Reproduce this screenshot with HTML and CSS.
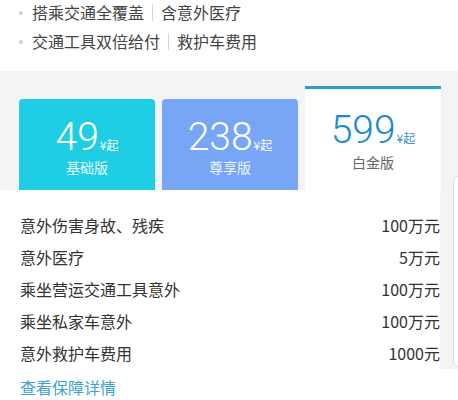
FILE: index.html
```html
<!DOCTYPE html>
<html>
    <head>
        <title>交通意外险</title>
        <meta charset="UTF-8">
        <link rel="stylesheet" href="styles.css">
    </head>
    <body>
        <div class="page">
            <ul class="features">
                <li>搭乘交通全覆盖<i class="sep"></i>含意外医疗</li>
                <li>交通工具双倍给付<i class="sep"></i>救护车费用</li>
            </ul>
            <div class="board">
                <div class="plans">
                    <div class="plan plan-basic">
                        <p class="price">49<small>¥起</small></p>
                        <p class="name">基础版</p>
                    </div>
                    <div class="plan plan-vip">
                        <p class="price">238<small>¥起</small></p>
                        <p class="name">尊享版</p>
                    </div>
                    <div class="plan plan-gold curr">
                        <p class="price">599<small>¥起</small></p>
                        <p class="name">白金版</p>
                    </div>
                </div>
                <ul class="cover">
                    <li><span>意外伤害身故、残疾</span><span>100万元</span></li>
                    <li><span>意外医疗</span><span>5万元</span></li>
                    <li><span>乘坐营运交通工具意外</span><span>100万元</span></li>
                    <li><span>乘坐私家车意外</span><span>100万元</span></li>
                    <li><span>意外救护车费用</span><span>1000元</span></li>
                </ul>
                <div class="peek"></div>
            </div>
            <a class="more" href="#">查看保障详情</a>
        </div>
    </body>
</html>
```

FILE: styles.css
```css
* {
    margin: 0;
    padding: 0;
    list-style: none;
}

body {
    background: #fff;
    font-family: "Noto Sans CJK SC", "Noto Sans", sans-serif;
    color: #333;
}

.page {
    width: 458px;
    height: 400px;
    overflow: hidden;
}

/* 顶部卖点 */
.features {
    height: 71px;
    margin-top: -2px;
    margin-bottom: 2px;
    padding-left: 32px;
    font-size: 16px;
    line-height: 29px;
    color: #444;
}

.features li {
    position: relative;
    display: flex;
    align-items: center;
}

.features li:before {
    content: "";
    position: absolute;
    left: -13px;
    top: 13px;
    width: 4px;
    height: 4px;
    border-radius: 50%;
    background: #d0d0d0;
}

.features .sep {
    display: inline-block;
    width: 1px;
    height: 17px;
    margin: 0 8px;
    background: #d6d6d6;
}

/* 套餐 */
.board {
    position: relative;
    background: #f4f4f6;
}

.plans {
    display: grid;
    grid-template-columns: repeat(3, 136px);
    column-gap: 7px;
    align-items: end;
    padding: 15px 0 0 19px;
}

.plan {
    height: 91px;
    border-radius: 4px 4px 0 0;
    text-align: center;
    color: #fff;
}

.plan-basic {
    background: #1fcee4;
}

.plan-vip {
    background: #78a6f6;
}

.plan-gold {
    height: 101px;
    border-top: 3px solid #2a9dcf;
    border-radius: 0;
    background: #fff;
}

.price {
    height: 38px;
    padding-top: 19px;
    font-family: Roboto, "Liberation Sans", sans-serif;
    font-weight: 300;
    font-size: 39px;
    line-height: 38px;
}

.price small {
    font-family: "Noto Sans CJK SC", sans-serif;
    font-weight: 400;
    font-size: 12px;
    line-height: 1;
    margin-left: 1px;
}

.plan-gold .price {
    padding-top: 22px;
    color: #1b8ad3;
}

.plan-gold .price small {
    color: #3a8fcc;
}

.name {
    margin-top: 1px;
    font-size: 14px;
    line-height: 20px;
    color: rgba(255, 255, 255, 0.92);
}

.plan-gold .name {
    margin-top: 3px;
    color: #666;
}

/* 保障内容 */
.cover {
    width: 420px;
    padding: 19px 0 0 20px;
    background: #fff;
    font-size: 16px;
    color: #333;
}

.cover li {
    display: flex;
    justify-content: space-between;
    height: 32px;
    line-height: 32px;
}

.peek {
    position: absolute;
    left: 453px;
    top: 105px;
    width: 20px;
    height: 189px;
    border: 1px solid #dcdcdc;
    border-radius: 6px;
    background: #fff;
}

.more {
    display: block;
    padding: 2px 0 0 20px;
    font-size: 16px;
    line-height: 32px;
    color: #3aa2d8;
    text-decoration: none;
}
```
